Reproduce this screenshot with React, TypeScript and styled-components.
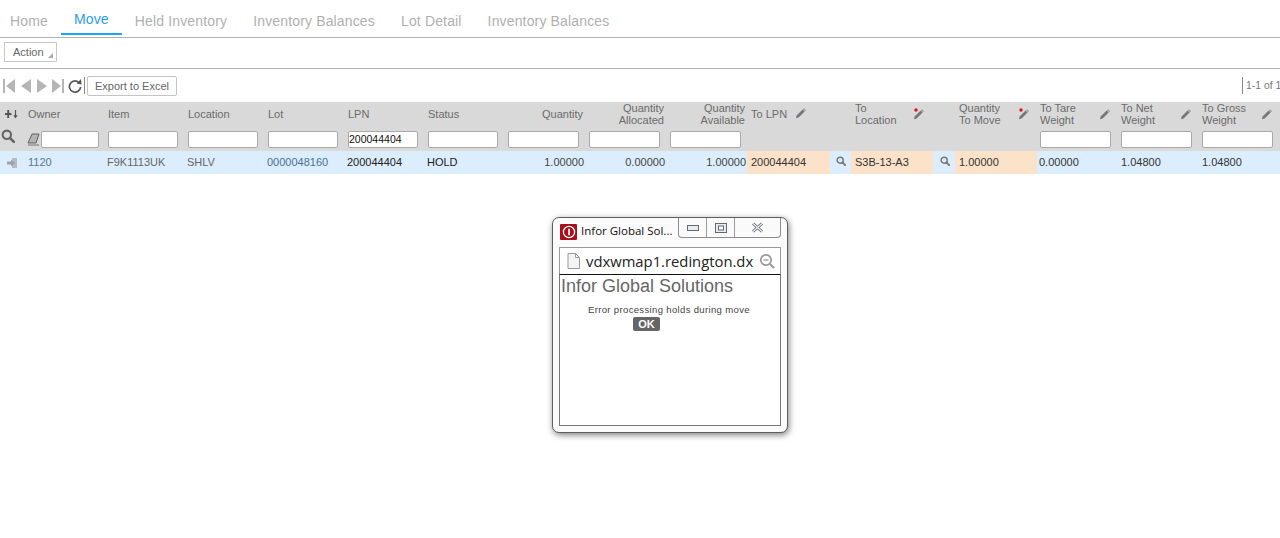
import React from "react";
import styled, { createGlobalStyle } from "styled-components";

const Global = createGlobalStyle`
  html, body { margin: 0; padding: 0; background: #fff; }
  body { font-family: "Liberation Sans", Arial, sans-serif; font-size: 11px; color: #666; overflow: hidden; }
  #root { height: 538px; position: relative; }
`;

const TabBar = styled.div`
  display: flex; align-items: flex-start; height: 37px; border-bottom: 1px solid #b4b4b4;
  box-sizing: content-box; overflow: hidden;
`;
const Tab = styled.div<{ $active?: boolean }>`
  box-sizing: border-box; height: 35px; padding: ${(p) => (p.$active ? "11px" : "13px")} 13px 0;
  font-size: 14px; line-height: 16px; white-space: nowrap; letter-spacing: .15px;
  color: ${(p) => (p.$active ? "#2b9cf2" : "#b0b0b0")};
  border-bottom: 2px solid ${(p) => (p.$active ? "#1ea4f5" : "transparent")};
  &:first-child { margin-left: -3px; }
`;
const ActionBar = styled.div`
  height: 26px; border-bottom: 1px solid #b4b4b4; padding: 4px 0 0 4px; box-sizing: content-box;
`;
const ActionButton = styled.div`
  box-sizing: border-box; width: 53px; height: 20px; border: 1px solid #c8c8c8; position: relative;
  padding-left: 8px; line-height: 18px; font-size: 11px; color: #666;
  &::after { content: ""; position: absolute; right: 3px; bottom: 3px; width: 0; height: 0;
    border-left: 5px solid transparent; border-bottom: 5px solid #aaa; }
`;
const PagerBar = styled.div`
  display: flex; align-items: center; height: 33px; padding-left: 3px; position: relative;
`;
const PagerIcon = styled.svg<{ $gap?: number }>`
  display: block; flex: none; margin-right: ${(p) => p.$gap ?? 0}px;
`;
const ExportButton = styled.div`
  box-sizing: border-box; width: 90px; height: 20px; margin-left: 2px; border: 1px solid #c4c4c4; border-radius: 2px;
  text-align: center; line-height: 18px; color: #666; font-size: 11px;
`;
const Divider = styled.span`
  width: 1px; height: 17px; background: #888; margin-left: 2px;
`;
const PageInfo = styled.div`
  margin-left: auto; border-left: 1px solid #888; padding-left: 3px; height: 17px; line-height: 17px;
  width: 38px; box-sizing: border-box; white-space: nowrap; color: #777; font-size: 10.4px;
`;

const COLS = "24px 80px 80px 80px 80px 80px 80px 81px 81px 81px 83px 21px 82px 22px 82px 80px 81px 82px";
const HeadRow = styled.div`
  display: grid; grid-template-columns: ${COLS}; height: 24px; background: #d9d9d9; align-items: center;
  line-height: 12px; color: #6b6b6b; font-size: 11px;
`;
const FilterRow = styled.div`
  display: grid; grid-template-columns: ${COLS}; height: 25px; background: #d9d9d9; align-items: start;
`;
const DataRow = styled.div`
  display: grid; grid-template-columns: ${COLS}; height: 23px; background: #dceefd; align-items: stretch;
  line-height: 23px; font-size: 11px;
`;
const HeadCell = styled.div<{ $right?: boolean; $span?: number; $shift?: number }>`
  padding: 0 ${(p) => (p.$right ? "2px" : "4px")} 0 ${(p) => 4 + (p.$shift ?? 0)}px; position: relative;
  text-align: ${(p) => (p.$right ? "right" : "left")};
  ${(p) => p.$span && `grid-column: span ${p.$span};`}
`;
const PenMark = styled.svg<{ $right: number; $top: number }>`
  position: absolute; right: ${(p) => p.$right}px; top: ${(p) => p.$top}px;
`;
const IconCell = styled.div`
  display: flex; align-items: center; justify-content: center;
`;
const RowLensCell = styled.div<{ $shift?: number }>`
  display: flex; align-items: center; justify-content: center; padding-bottom: 4px;
  padding-left: ${(p) => p.$shift ?? 0}px;
`;
const FilterLensCell = styled.div`
  display: flex; padding: 3px 0 0 1px;
`;
const FilterCell = styled.div<{ $lead?: boolean; $left?: number }>`
  padding-top: 5px; padding-left: ${(p) => p.$left ?? 4}px; display: flex; align-items: flex-start;
  ${(p) => p.$lead && "padding-left: 3px; gap: 1px;"}
`;
const FilterInput = styled.div<{ $w: number }>`
  box-sizing: border-box; width: ${(p) => p.$w}px; height: 17px; background: #fff; border: 1px solid #a9a9a9; border-radius: 2px;
  line-height: 15px; font-size: 10.5px; color: #111; overflow: hidden; flex: none;
`;
const EraserIcon = styled.svg`
  flex: none;
`;
const Cell = styled.div<{ $right?: boolean; $edit?: boolean; $tone?: string; $shift?: number }>`
  padding: 0 ${(p) => (p.$right ? "1px" : "4px")} 0 ${(p) => 4 + (p.$shift ?? 0)}px;
  text-align: ${(p) => (p.$right ? "right" : "left")};
  white-space: nowrap;
  color: ${(p) => p.$tone ?? "#666"};
  ${(p) => p.$edit && "background: #fde2ca;"}
`;

const Win = styled.div`
  position: absolute; left: 552px; top: 217px; width: 236px; height: 216px; box-sizing: border-box;
  background: #fbfbfb; border: 1px solid #5f5f5f; border-radius: 7px;
  box-shadow: 1px 2px 6px rgba(0,0,0,.5); padding: 0 6px 6px; display: flex; flex-direction: column;
`;
const TitleBar = styled.div`
  display: flex; height: 28px; flex: none; align-items: flex-start; position: relative;
`;
const Logo = styled.svg`
  display: block; flex: none; margin: 6px 0 0 1px;
`;
const WinTitle = styled.div`
  font-family: "Open Sans", sans-serif; font-size: 11.5px; color: #111; margin: 5px 0 0 4px; line-height: 16px; white-space: nowrap;
`;
const Caption = styled.div`
  position: absolute; right: 0; top: 0; width: 103px; height: 20px; box-sizing: border-box;
  display: grid; grid-template-columns: 27px 28px 1fr; border: 1px solid #8c8c8c; border-top: none; border-radius: 0 0 4px 4px; background: #fafafa;
`;
const CapBtn = styled.div`
  display: flex; align-items: center; justify-content: center; & + & { border-left: 1px solid #9c9c9c; }
`;
const Address = styled.div`
  flex: none; height: 28px; box-sizing: border-box; display: flex; align-items: center; margin-top: 1px;
  border: 1px solid #9a9a9a; border-bottom: 1px solid #111; background: #fff; padding: 0 5px 0 7px; overflow: hidden;
`;
const DocIcon = styled.svg`
  flex: none;
`;
const ZoomIcon = styled.svg`
  flex: none; margin-left: auto;
`;
const Url = styled.div`
  font-family: "Open Sans", sans-serif; font-size: 14.8px; color: #222; margin-left: 6px; white-space: nowrap; flex: none;
`;
const WinBody = styled.div`
  flex: 1; border: 1px solid #777; border-top: none; background: #fff; position: relative; padding: 1px 0 0 1px;
`;
const WinHeading = styled.div`
  font-size: 18px; line-height: 21px; color: #666;
`;
const WinMessage = styled.div`
  font-size: 9.5px; line-height: 12px; letter-spacing: .35px; color: #444; margin: 7px 0 0 27px; white-space: nowrap;
`;
const OkButton = styled.div`
  width: 27px; height: 14px; margin: 1px 0 0 72px; background: #666; border-radius: 2px; color: #fff; text-align: center;
  font-size: 11px; font-weight: bold; line-height: 14px;
`;

const Pencil = ({ req, right, top = 5 }: { req?: boolean; right: number; top?: number }) => (
  <PenMark $right={right} $top={top} width="14" height="14" viewBox="0 0 14 14">
    <path d="M2.6 9.5 8.6 3.6l2 2-6 6-2.6.6z" fill="#777" />
    <path d="M9 3.2l1-.9 2 2-.9 1z" fill="#999" />
    {req && <circle cx="4" cy="3" r="1.7" fill="#e0141c" />}
  </PenMark>
);
const Lens = ({ size = 10, color = "#666" }: { size?: number; color?: string }) => (
  <svg width={size} height={size} viewBox="0 0 12 12">
    <circle cx="5" cy="5" r="3.6" fill="none" stroke={color} strokeWidth="1.8" />
    <path d="M7.8 7.8 11 11" stroke={color} strokeWidth="2.2" strokeLinecap="round" />
  </svg>
);

const heads: { t: React.ReactNode; right?: boolean }[] = [
  { t: "Owner" }, { t: "Item" }, { t: "Location" }, { t: "Lot" }, { t: "LPN" }, { t: "Status" },
  { t: "Quantity", right: true },
  { t: <>Quantity<br />Allocated</>, right: true },
  { t: <>Quantity<br />Available</>, right: true },
];

export default function App() {
  return (
    <>
      <Global />
      <TabBar>
        <Tab>Home</Tab>
        <Tab $active>Move</Tab>
        <Tab>Held Inventory</Tab>
        <Tab>Inventory Balances</Tab>
        <Tab>Lot Detail</Tab>
        <Tab>Inventory Balances</Tab>
      </TabBar>
      <ActionBar><ActionButton>Action</ActionButton></ActionBar>
      <PagerBar>
        <PagerIcon $gap={6} width="12" height="16" viewBox="0 0 12 16"><path d="M0 1h2v14H0zM12 1v14L3 8z" fill="#b5b5b5" /></PagerIcon>
        <PagerIcon $gap={6} width="10" height="16" viewBox="0 0 10 16"><path d="M10 1v14L0 8z" fill="#b5b5b5" /></PagerIcon>
        <PagerIcon $gap={5} width="10" height="16" viewBox="0 0 10 16"><path d="M0 1v14l10-7z" fill="#b5b5b5" /></PagerIcon>
        <PagerIcon $gap={4} width="12" height="16" viewBox="0 0 12 16"><path d="M0 1v14l9-7zM10 1h2v14h-2z" fill="#b5b5b5" /></PagerIcon>
        <PagerIcon width="14" height="16" viewBox="0 0 14 16">
          <path d="M11.5 5.2A5.6 5.6 0 1 0 12.6 9" fill="none" stroke="#555" strokeWidth="1.7" />
          <path d="M8.6 5.6 13.6 6.4 13 1z" fill="#555" />
        </PagerIcon>
        <Divider />
        <ExportButton>Export to Excel</ExportButton>
        <PageInfo>1-1 of 1</PageInfo>
      </PagerBar>
      <HeadRow>
        <IconCell>
          <svg width="14" height="10" viewBox="0 0 14 10">
            <path d="M3.2 1v8M0 5h6.5" stroke="#555" strokeWidth="1.9" fill="none" />
            <path d="M10.5 1v6.5" stroke="#555" strokeWidth="1.2" /><path d="M8.3 6.2h4.4L10.5 9.5z" fill="#555" />
          </svg>
        </IconCell>
        {heads.map((h, i) => <HeadCell key={i} $right={h.right}>{h.t}</HeadCell>)}
        <HeadCell $span={2}>To LPN<Pencil right={43} top={-2} /></HeadCell>
        <HeadCell $span={2}>To<br />Location<Pencil req right={29} /></HeadCell>
        <HeadCell>Quantity<br />To Move<Pencil req right={6} /></HeadCell>
        <HeadCell $shift={-1}>To Tare<br />Weight<Pencil right={5} /></HeadCell>
        <HeadCell>To Net<br />Weight<Pencil right={5} /></HeadCell>
        <HeadCell>To Gross<br />Weight<Pencil right={6} /></HeadCell>
      </HeadRow>
      <FilterRow>
        <FilterLensCell><Lens size={14} /></FilterLensCell>
        <FilterCell $lead>
          <EraserIcon width="13" height="16" viewBox="0 0 13 16">
            <path d="M1 12 5 3h7l-3 9z" fill="#b4b4b4" stroke="#555" strokeWidth=".9" /><path d="M1 14h11" stroke="#777" />
          </EraserIcon>
          <FilterInput $w={58} />
        </FilterCell>
        <FilterCell><FilterInput $w={70} /></FilterCell>
        <FilterCell><FilterInput $w={70} /></FilterCell>
        <FilterCell><FilterInput $w={70} /></FilterCell>
        <FilterCell><FilterInput $w={70}>200044404</FilterInput></FilterCell>
        <FilterCell><FilterInput $w={70} /></FilterCell>
        <FilterCell><FilterInput $w={71} /></FilterCell>
        <FilterCell><FilterInput $w={71} /></FilterCell>
        <FilterCell><FilterInput $w={71} /></FilterCell>
        <div /><div /><div /><div /><div />
        <FilterCell $left={3}><FilterInput $w={71} /></FilterCell>
        <FilterCell><FilterInput $w={71} /></FilterCell>
        <FilterCell><FilterInput $w={71} /></FilterCell>
      </FilterRow>
      <DataRow>
        <IconCell>
          <svg width="12" height="12" viewBox="0 0 12 12">
            <path d="M6 1h5v10H6z" fill="#b8bcc0" /><path d="M1 4.5h4V2.5L9 6l-4 3.5v-2H1z" fill="#9ea3a8" />
          </svg>
        </IconCell>
        <Cell $tone="#5a7895">1120</Cell>
        <Cell $shift={-1}>F9K1113UK</Cell>
        <Cell $shift={-1}>SHLV</Cell>
        <Cell $tone="#4b7096" $shift={-1}>0000048160</Cell>
        <Cell $tone="#222" $shift={-1}>200044404</Cell>
        <Cell $tone="#222" $shift={-1}>HOLD</Cell>
        <Cell $right $tone="#444">1.00000</Cell>
        <Cell $right $tone="#444">0.00000</Cell>
        <Cell $right $tone="#444">1.00000</Cell>
        <Cell $edit $tone="#333">200044404</Cell>
        <RowLensCell><Lens size={10} color="#777" /></RowLensCell>
        <Cell $edit $tone="#333">S3B-13-A3</Cell>
        <RowLensCell $shift={1}><Lens size={10} color="#777" /></RowLensCell>
        <Cell $edit $tone="#333">1.00000</Cell>
        <Cell $tone="#333" $shift={-2}>0.00000</Cell>
        <Cell $tone="#333">1.04800</Cell>
        <Cell $tone="#333">1.04800</Cell>
      </DataRow>

      <Win>
        <TitleBar>
          <Logo width="17" height="16" viewBox="0 0 17 16">
            <rect width="17" height="16" rx="1" fill="#a90d1e" />
            <circle cx="9" cy="8" r="5.6" fill="none" stroke="#fff" strokeWidth="1.3" />
            <rect x="8.2" y="4.8" width="1.7" height="6.4" fill="#fff" />
          </Logo>
          <WinTitle>Infor Global Sol...</WinTitle>
          <Caption>
            <CapBtn><svg width="12" height="6" viewBox="0 0 12 6"><rect x=".5" y=".5" width="11" height="5" fill="#e8edf2" stroke="#667" /></svg></CapBtn>
            <CapBtn><svg width="12" height="10" viewBox="0 0 12 10"><rect x=".5" y=".5" width="11" height="9" fill="#e8edf2" stroke="#667" /><rect x="3.5" y="3" width="5" height="4" fill="#fff" stroke="#667" /></svg></CapBtn>
            <CapBtn>
              <svg width="13" height="11" viewBox="0 0 13 11">
                <path d="M2 1.5 11 9.5M11 1.5 2 9.5" stroke="#667" strokeWidth="3" />
                <path d="M2 1.5 11 9.5M11 1.5 2 9.5" stroke="#eef1f4" strokeWidth="1.2" />
              </svg>
            </CapBtn>
          </Caption>
        </TitleBar>
        <Address>
          <DocIcon width="13" height="16" viewBox="0 0 13 16">
            <path d="M1 .5h7.5L12.5 4.5v11H1z" fill="#f4f4f4" stroke="#999" /><path d="M8.5.5v4h4" fill="none" stroke="#999" />
          </DocIcon>
          <Url>vdxwmap1.redington.dx</Url>
          <ZoomIcon width="16" height="16" viewBox="0 0 16 16">
            <circle cx="7" cy="7" r="5.2" fill="none" stroke="#999" strokeWidth="1.7" />
            <path d="M4.5 7h5" stroke="#999" strokeWidth="1.3" /><path d="M11 11l4 4" stroke="#999" strokeWidth="2.2" />
          </ZoomIcon>
        </Address>
        <WinBody>
          <WinHeading>Infor Global Solutions</WinHeading>
          <WinMessage>Error processing holds during move</WinMessage>
          <OkButton>OK</OkButton>
        </WinBody>
      </Win>
    </>
  );
}
